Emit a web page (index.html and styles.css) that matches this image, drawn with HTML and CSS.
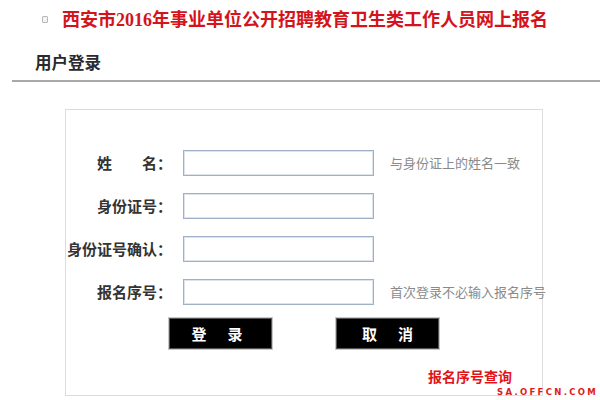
FILE: index.html
```html
<!DOCTYPE html>
<html lang="zh-CN">
<head>
<meta charset="utf-8">
<title>用户登录</title>
<link rel="stylesheet" href="styles.css">
</head>
<body>
<div class="top">
  <span class="icon"></span>
  <h1 class="title">西安市<span class="num">2016</span>年事业单位公开招聘教育卫生类工作人员网上报名</h1>
</div>
<div class="section"><h2 class="section-title">用户登录</h2></div>
<div class="box">
  <div class="form">
    <label class="label">姓　　名：</label>
    <input class="field" type="text">
    <span class="hint">与身份证上的姓名一致</span>

    <label class="label">身份证号：</label>
    <input class="field" type="text">
    <span class="hint"></span>

    <label class="label">身份证号确认：</label>
    <input class="field" type="text">
    <span class="hint"></span>

    <label class="label">报名序号：</label>
    <input class="field" type="text">
    <span class="hint">首次登录不必输入报名序号</span>
  </div>
  <div class="buttons">
    <button class="btn btn-login"><span>登</span><span>录</span></button>
    <button class="btn btn-cancel"><span>取</span><span>消</span></button>
  </div>
  <div class="query">报名序号查询</div>
</div>
<div class="watermark">SA.OFFCN.COM</div>
</body>
</html>
```
FILE: styles.css
```css
html, body {
  margin: 0;
  padding: 0;
}
body {
  width: 600px;
  height: 400px;
  overflow: hidden;
  position: relative;
  background: #fff;
  font-family: "Noto Sans CJK SC", "Liberation Sans", sans-serif;
}
.top {
  display: flex;
  align-items: center;
  padding: 9px 0 0 42px;
  height: 20px;
}
.icon {
  width: 4px;
  height: 5px;
  border: 1px solid #b8b8b8;
  background: #f4f4f4;
  border-radius: 1px;
  margin-right: 14px;
}
.title {
  margin: 0;
  font-size: 18px;
  line-height: 20px;
  font-weight: bold;
  color: #d3141d;
  white-space: nowrap;
}
.title .num {
  font-family: "Liberation Serif", serif;
}
.section {
  margin-left: 12px;
  padding: 23px 0 8px 23px;
  border-bottom: 2px solid #a9a9a9;
}
.section-title {
  margin: 0;
  font-size: 16.5px;
  line-height: 20px;
  font-weight: bold;
  color: #2a2a2a;
}
.box {
  margin: 27px 0 0 65px;
  width: 476px;
  border: 1px solid #dcdcdc;
  padding-top: 40px;
  box-sizing: content-box;
  height: 245px;
}
.form {
  display: grid;
  grid-template-columns: 106px 191px auto;
  column-gap: 11px;
  row-gap: 17px;
  align-items: center;
}
.label {
  justify-self: end;
  font-size: 15px;
  line-height: 18px;
  font-weight: bold;
  color: #333;
  white-space: nowrap;
}
.field {
  width: 191px;
  height: 26px;
  box-sizing: border-box;
  border: 1px solid #9fb0c7;
  box-shadow: inset 0 0 0 1px #dce3ec;
  margin: 0;
  padding: 0 4px;
  background: #fff;
}
.hint {
  margin-left: 5px;
  font-size: 13px;
  line-height: 16px;
  color: #8a8a8a;
  white-space: nowrap;
}
.buttons {
  display: flex;
  gap: 64px;
  margin: 13px 0 0 103px;
}
.btn {
  width: 103px;
  height: 31px;
  box-sizing: border-box;
  background: #000;
  border: 1px solid #555;
  box-shadow: 0 0 0 1px #c8c8c8;
  color: #fff;
  font-family: "Noto Sans CJK SC", sans-serif;
  font-size: 15px;
  font-weight: bold;
  display: flex;
  align-items: center;
  justify-content: center;
  gap: 21px;
  padding: 0;
}
.btn-login {
  padding-right: 7px;
}
.query {
  margin: 19px 0 0 362px;
  font-size: 14px;
  line-height: 16px;
  font-weight: bold;
  color: #e2141b;
}
.watermark {
  position: absolute;
  left: 497px;
  top: 388px;
  font-family: "DejaVu Sans", sans-serif;
  font-size: 8.5px;
  line-height: 9px;
  font-weight: bold;
  letter-spacing: 2.3px;
  color: #e01a1a;
}
```
